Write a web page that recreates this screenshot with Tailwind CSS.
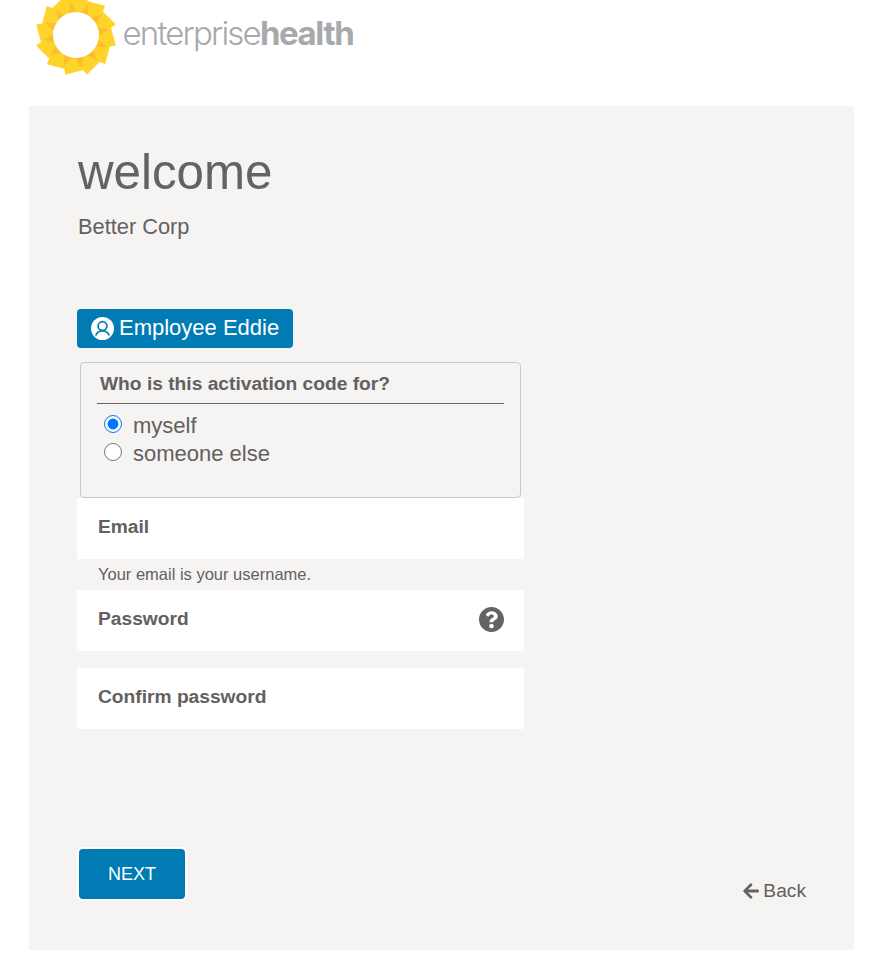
<!DOCTYPE html>
<html lang="en">
<head>
  <meta charset="UTF-8" />
  <meta name="viewport" content="width=device-width, initial-scale=1.0"/>
  <title>Enterprise Health - Welcome</title>
  <script src="https://cdn.jsdelivr.net/npm/@tailwindcss/browser@4"></script>
</head>
<body class="bg-white text-[#636060] font-['Liberation_Sans',Arial,sans-serif] min-h-screen">

  <header class="h-[106px] flex items-start pl-[33.5px] overflow-hidden">
    <svg class="w-[84px] h-[84px] -mt-[7.5px] shrink-0" viewBox="-42 -42 84 84">
      <defs>
        <g id="petals">
          <polygon id="p" points="10.6,-39.8 -9,-34.5 -6.84,-18.79 14,-17.32" fill="#ffd42a"/>
          <use href="#p" transform="rotate(30)"/>
          <use href="#p" transform="rotate(60)"/>
          <use href="#p" transform="rotate(90)"/>
          <use href="#p" transform="rotate(120)"/>
          <use href="#p" transform="rotate(150)"/>
          <use href="#p" transform="rotate(180)"/>
          <use href="#p" transform="rotate(210)"/>
          <use href="#p" transform="rotate(240)"/>
          <use href="#p" transform="rotate(270)"/>
          <use href="#p" transform="rotate(300)"/>
          <use href="#p" transform="rotate(330)"/>
        </g>
        <polygon id="w" points="-5,-33 -7.5,-21.5 1,-22" fill="#fdbe2e"/>
      </defs>
      <use href="#petals"/>
      <use href="#w"/>
      <use href="#w" transform="rotate(30)"/>
      <use href="#w" transform="rotate(60)"/>
      <use href="#w" transform="rotate(90)"/>
      <use href="#w" transform="rotate(120)"/>
      <use href="#w" transform="rotate(150)"/>
      <use href="#w" transform="rotate(180)"/>
      <use href="#w" transform="rotate(210)"/>
      <use href="#w" transform="rotate(240)"/>
      <use href="#w" transform="rotate(270)"/>
      <use href="#w" transform="rotate(300)"/>
      <use href="#w" transform="rotate(330)"/>
      <circle r="23" fill="#fff"/>
    </svg>
    <div class="ml-[5px] mt-[13px] text-[33px] leading-[40px] text-[#a7a9ac] font-['Inter',sans-serif] font-light"><span class="tracking-[-1.8px]">enterprise</span><span class="font-bold tracking-[-1.4px]">health</span></div>
  </header>

  <main class="ml-[29px] w-[825px] h-[844px] bg-[#f5f4f3] px-12 pt-[37px] pb-12 flex flex-col">
    <h1 class="ml-px text-[49.3px] leading-[58px] text-[#636363]">welcome</h1>
    <p class="ml-px mt-[13px] text-[21.8px] leading-[26px]">Better Corp</p>

    <div class="mt-[69px] w-fit h-[39px] pb-[2px] rounded bg-[#007bb3] text-white px-[14px] flex items-center gap-[5px] text-[22px]">
      <svg class="w-[23px] h-[23px] mt-[2px]" viewBox="0 0 24 24">
        <circle cx="12" cy="12" r="12" fill="#fff"/>
        <circle cx="12" cy="9.5" r="4.6" fill="#fff" stroke="#007bb3" stroke-width="1.8"/>
        <path d="M5 19.2c1-3 3.8-4.6 7-4.6s6 1.6 7 4.6" fill="none" stroke="#007bb3" stroke-width="1.8"/>
      </svg>
      <span>Employee Eddie</span>
    </div>

    <div class="w-[447px]">
      <fieldset class="mt-[14px] mx-[3px] h-[136px] border border-[#c9c9c9] rounded px-4 pt-[8px]">
        <div class="pl-[3px] pb-[6px] border-b border-[#666] text-[19.2px] leading-[26px] font-bold">Who is this activation code for?</div>
        <label class="mt-2 ml-[7px] flex items-center gap-[11px] text-[22px] leading-[28px]">
          <input type="radio" name="who" checked class="w-[18px] h-[18px] m-0 -translate-y-[2px]" />
          myself
        </label>
        <label class="ml-[7px] flex items-center gap-[11px] text-[22px] leading-[28px]">
          <input type="radio" name="who" class="w-[18px] h-[18px] m-0 -translate-y-[2px]" />
          someone else
        </label>
      </fieldset>

      <div class="h-[61px] bg-white pl-[21px] pt-4 text-[19.2px] leading-[26px] font-bold">Email</div>
      <p class="h-[31px] pl-[21px] pt-[5px] text-[16.5px] leading-[20px]">Your email is your username.</p>
      <div class="h-[61px] bg-white pl-[21px] pr-5 pt-4 flex justify-between text-[19.2px] leading-[26px] font-bold">
        <span>Password</span>
        <svg class="w-[25px] h-[25px] mt-px fill-[#636363]" viewBox="8 8 496 496"><path d="M504 256c0 136.997-111.043 248-248 248S8 392.997 8 256C8 119.083 119.043 8 256 8s248 111.083 248 248zM262.655 90c-54.497 0-89.255 22.957-116.549 63.758-3.536 5.286-2.353 12.415 2.715 16.258l34.699 26.31c5.205 3.947 12.621 3.008 16.665-2.122 17.864-22.658 30.113-35.797 57.303-35.797 20.429 0 45.698 13.148 45.698 32.958 0 14.976-12.363 22.667-32.534 33.976C247.128 238.528 216 254.941 216 296v4c0 6.627 5.373 12 12 12h56c6.627 0 12-5.373 12-12v-1.333c0-28.462 83.186-29.647 83.186-106.667 0-58.002-60.165-102-116.531-102zM256 338c-25.365 0-46 20.635-46 46 0 25.364 20.635 46 46 46s46-20.636 46-46c0-25.365-20.635-46-46-46z"/></svg>
      </div>
      <div class="mt-[17px] h-[61px] bg-white pl-[21px] pt-4 text-[19.2px] leading-[26px] font-bold">Confirm password</div>
    </div>

    <div class="mt-auto flex justify-between items-end">
      <button class="w-[110px] h-[54px] mb-px rounded-md border-2 border-white bg-[#007bb3] text-white text-[18px]">NEXT</button>
      <a href="#" class="flex items-center gap-[3px] text-[19.2px] leading-[22px]">
        <svg class="w-[18px] h-[18px] fill-[#636363]" viewBox="0 0 448 512"><path d="M257.5 445.1l-22.2 22.2c-9.4 9.4-24.6 9.4-33.9 0L7 273c-9.4-9.4-9.4-24.6 0-33.9L201.4 44.7c9.4-9.4 24.6-9.4 33.9 0l22.2 22.2c9.5 9.5 9.3 25-.4 34.3L136.6 216H424c13.3 0 24 10.7 24 24v32c0 13.3-10.7 24-24 24H136.6l120.5 114.8c9.8 9.3 10 24.8.4 34.3z"/></svg>
        Back
      </a>
    </div>
  </main>

</body>
</html>
